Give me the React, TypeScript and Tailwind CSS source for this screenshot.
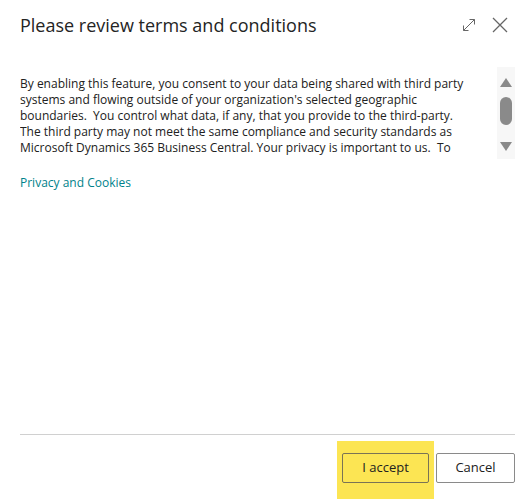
import React from "react";

const terms = [
  "By enabling this feature, you consent to your data being shared with third party",
  "systems and flowing outside of your organization's selected geographic",
  "boundaries.\u00a0 You control what data, if any, that you provide to the third-party.",
  "The third party may not meet the same compliance and security standards as",
  "Microsoft Dynamics 365 Business Central. Your privacy is important to us.\u00a0 To",
];

export default function App() {
  return (
    <div
      className="w-[529px] h-[499px] bg-white relative overflow-hidden text-[#212121]"
      style={{ fontFamily: '"Segoe UI", "Open Sans", sans-serif' }}
    >
      {/* Header */}
      <div className="flex items-center h-[50px] pl-5 pr-[21px]">
        <h1 className="flex-1 text-[18px] leading-none font-medium text-[#242424]">
          Please review terms and conditions
        </h1>
        <button className="w-[14px] h-[14px] mr-[16px] text-[#666]" aria-label="Expand">
          <svg viewBox="0 0 14 14" className="w-[14px] h-[14px]" fill="none" stroke="currentColor" strokeWidth="1">
            <path d="M1.5 12.5 L12.5 1.5 M7.5 1.5 H12.5 V6.5 M1.5 7.5 V12.5 H6.5" />
          </svg>
        </button>
        <button className="w-[16px] h-[16px] text-[#666]" aria-label="Close">
          <svg viewBox="0 0 16 16" className="w-[16px] h-[16px]" fill="none" stroke="currentColor" strokeWidth="1.3">
            <path d="M1 1 L15 15 M15 1 L1 15" />
          </svg>
        </button>
      </div>

      {/* Scrollable terms */}
      <div className="flex mt-[17px] ml-5 mr-[14px] h-[92px]">
        <div className="flex-1 pt-[9px]">
          <div className="h-[80px] overflow-hidden text-[12px] leading-[16px] text-[#212121] whitespace-nowrap">
            {terms.map((line) => (
              <div key={line}>{line}</div>
            ))}
          </div>
        </div>
        <div className="w-[18px] ml-[18px] bg-[#f7f7f7] flex flex-col items-center pt-[11px]">
          <svg viewBox="0 0 12 9" className="w-[12px] h-[9px]" fill="#8a8a8a">
            <path d="M6 0 L12 9 H0 Z" />
          </svg>
          <div className="w-[12px] h-[28px] rounded-full bg-[#8a8a8a] mt-[10px]" />
          <svg viewBox="0 0 12 9" className="w-[12px] h-[9px] mt-[17px]" fill="#8a8a8a">
            <path d="M0 0 H12 L6 9 Z" />
          </svg>
        </div>
      </div>

      <a href="#" className="block w-fit ml-5 mt-[16px] text-[12px] leading-[16px] text-[#00828b]">
        Privacy and Cookies
      </a>

      {/* Footer */}
      <div className="absolute left-5 right-[14px] top-[434px] border-t border-[#d0d0d0]" />
      <div className="absolute left-[337px] top-[441px] w-[97px] h-[58px] bg-[#fce553]" />
      <div className="absolute top-[453px] right-[14px] flex gap-[7px]">
        <button className="w-[87px] h-[30px] rounded-[2px] border border-[#7a7355] bg-[#fce553] text-[13px] text-[#212121]">
          I accept
        </button>
        <button className="w-[79px] h-[30px] rounded-[2px] border border-[#8a8a8a] bg-white text-[13px] text-[#212121]">
          Cancel
        </button>
      </div>
    </div>
  );
}
